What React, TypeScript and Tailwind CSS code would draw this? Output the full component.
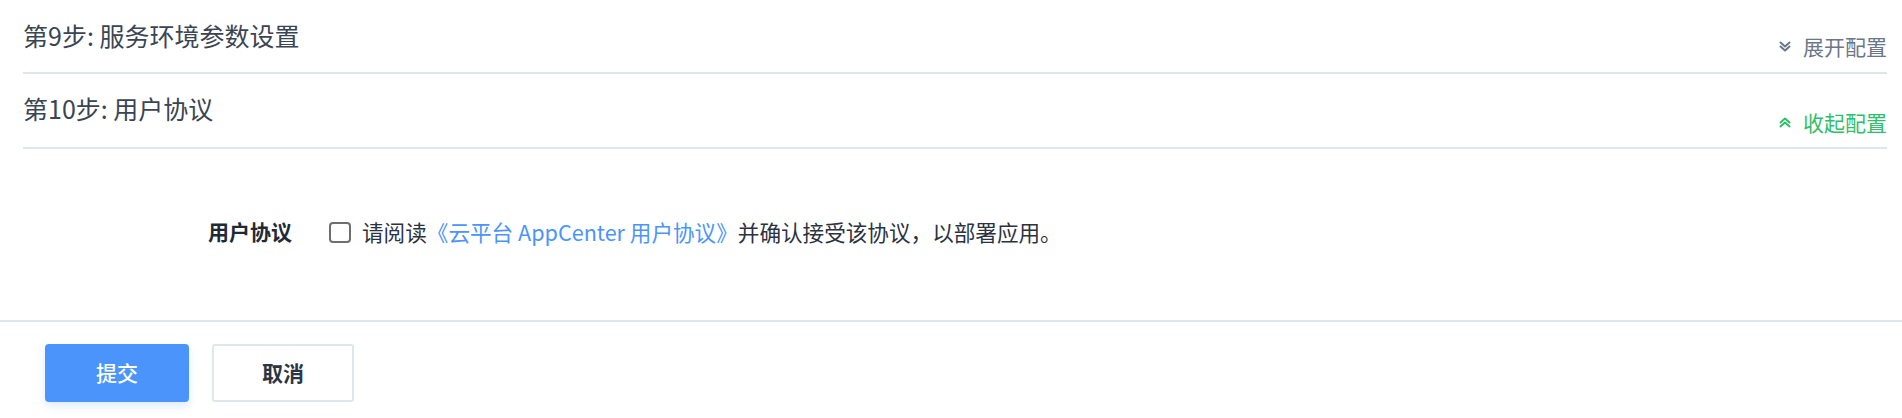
import { useState } from "react"

const font = { fontFamily: '"Noto Sans CJK SC", "Noto Sans", sans-serif' }

function Chevrons({ up }: { up?: boolean }) {
  return (
    <svg width="14" height="13" viewBox="0 0 14 13" fill="none" stroke="currentColor" strokeWidth="2" strokeLinecap="round" strokeLinejoin="round">
      {up ? (
        <>
          <path d="M2.5 6.5 L7 2.5 L11.5 6.5" />
          <path d="M2.5 10.5 L7 6.5 L11.5 10.5" />
        </>
      ) : (
        <>
          <path d="M2.5 2.5 L7 6.5 L11.5 2.5" />
          <path d="M2.5 6.5 L7 10.5 L11.5 6.5" />
        </>
      )}
    </svg>
  )
}

export default function App() {
  const [open9, setOpen9] = useState(false)
  const [open10, setOpen10] = useState(true)
  const [agreed, setAgreed] = useState(false)

  return (
    <div className="w-full min-h-[418px] bg-white" style={font}>
      <div className="pl-[23px] pr-[15px]">
        {/* Step 9 */}
        <div className="flex justify-between h-[74px] border-b-2 border-[#dfe6ee]">
          <div className="pt-[18px] text-[25px] leading-[34px] text-[#3a4553]">第9步: 服务环境参数设置</div>
          <button
            onClick={() => setOpen9(!open9)}
            className="self-end mb-[12px] flex items-center gap-[11px] text-[21px] leading-[28px] text-[#6b7787]"
          >
            <Chevrons up={open9} />
            {open9 ? "收起配置" : "展开配置"}
          </button>
        </div>

        {/* Step 10 */}
        <div className="flex justify-between h-[75px] border-b-2 border-[#dfe6ee]">
          <div className="pt-[17px] text-[25px] leading-[34px] text-[#3a4553]">第10步: 用户协议</div>
          <button
            onClick={() => setOpen10(!open10)}
            className="self-end mb-[11px] flex items-center gap-[11px] text-[21px] leading-[28px] text-[#2fbf6a]"
          >
            <Chevrons up={open10} />
            {open10 ? "收起配置" : "展开配置"}
          </button>
        </div>
      </div>

      {open10 && (
        <div className="pl-[208px] pt-[68px] pb-[73px]">
          <div className="flex items-center h-[30px]">
            <span className="w-[121px] text-[21px] font-bold text-[#1f2a37]">用户协议</span>
            <label className="flex items-center gap-[11px] text-[21.6px] text-[#2b3340] cursor-pointer">
              <input
                type="checkbox"
                checked={agreed}
                onChange={(e) => setAgreed(e.target.checked)}
                className="appearance-none w-[22px] h-[21px] border-2 border-[#6e6e6e] rounded-[4px] checked:bg-[#4a94fc] checked:border-[#4a94fc]"
              />
              <span>
                请阅读<a className="text-[#4a94fc]">《云平台 AppCenter 用户协议》</a>并确认接受该协议，以部署应用。
              </span>
            </label>
          </div>
        </div>
      )}

      <div className="border-t-2 border-[#dfe6ee] flex gap-[23px] pl-[45px] pt-[22px] pb-[16px]">
        <button className="w-[144px] h-[58px] rounded-[4px] bg-[#4a94fc] text-white text-[21px] font-medium shadow-[0_4px_10px_rgba(74,148,252,0.18)]">
          提交
        </button>
        <button className="w-[142px] h-[58px] rounded-[3px] border-2 border-[#dfe6ee] bg-white text-[#2b3544] text-[21px] font-bold">
          取消
        </button>
      </div>
    </div>
  )
}
